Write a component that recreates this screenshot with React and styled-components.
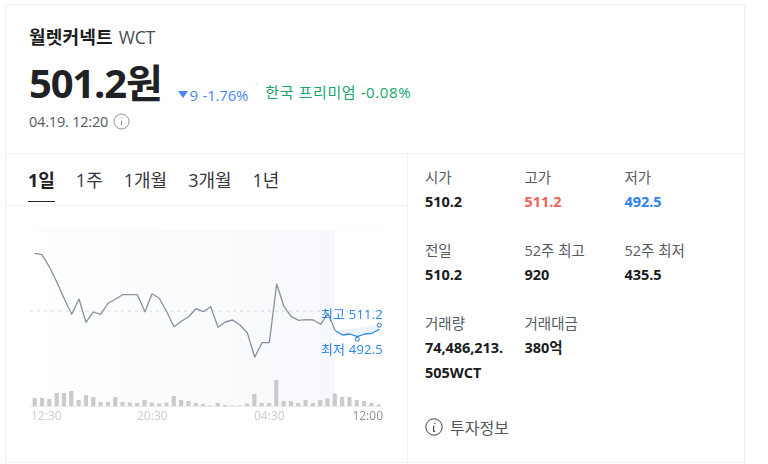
import React from "react";
import styled, { createGlobalStyle } from "styled-components";

const Global = createGlobalStyle`
  html, body { margin: 0; padding: 0; background: #fff; }
  body { font-family: "Open Sans", "Noto Sans CJK KR", sans-serif; color: #1a1c20; }
  * { box-sizing: border-box; }
`;

const Page = styled.div`
  width: 768px;
  height: 464px;
  padding: 4px 23px 0 5px;
  overflow: hidden;
`;
const Card = styled.div`
  width: 740px;
  height: 459px;
  border: 1px solid #eeeff1;
  display: flex;
  flex-direction: column;
`;
const Header = styled.header`
  height: 149px;
  padding: 20px 0 0 23px;
  border-bottom: 1px solid #f1f2f4;
  flex: none;
`;
const Title = styled.div`
  display: flex;
  align-items: baseline;
  gap: 6px;
  height: 24px;
  line-height: 24px;
`;
const Name = styled.strong`
  font-size: 18px;
  font-weight: 700;
  letter-spacing: 0.2px;
`;
const Symbol = styled.span`
  font-size: 17.5px;
  color: #444a55;
  letter-spacing: -0.3px;
`;
const PriceRow = styled.div`
  display: flex;
  align-items: baseline;
  margin-top: 12px;
  height: 44px;
`;
const Price = styled.div`
  font-size: 40px;
  line-height: 44px;
  font-weight: 700;
  letter-spacing: -1.2px;
  color: #1f2125;
`;
const Change = styled.span`
  display: inline-flex;
  align-items: center;
  gap: 2px;
  font-size: 15px;
  color: #4c87f4;
  letter-spacing: -0.2px;
  word-spacing: 1px;
  margin-left: 16px;
`;
const Dot = styled.span`
  width: 3px;
  height: 3px;
  border-radius: 50%;
  background: #eceef1;
  margin: 0 7px;
  align-self: center;
`;
const Premium = styled.span`
  font-size: 15px;
  color: #12a86b;
  letter-spacing: 0.6px;
`;
const DateRow = styled.div`
  display: flex;
  align-items: center;
  gap: 5px;
  margin-top: 7px;
  font-size: 14.5px;
  color: #555a63;
  letter-spacing: -0.2px;
`;
const Body = styled.div`
  flex: 1;
  display: flex;
  min-height: 0;
`;
const Left = styled.section`
  width: 402px;
  flex: none;
  border-right: 1px solid #f1f2f4;
`;
const Tabs = styled.nav`
  display: flex;
  gap: 21px;
  height: 52px;
  padding: 0 0 0 22px;
  border-bottom: 1px solid #f1f2f4;
`;
const Tab = styled.button`
  border: 0;
  background: none;
  padding: 2px 0 0;
  height: 48px;
  font: inherit;
  font-size: 18px;
  font-weight: ${(p) => (p.$on ? 700 : 400)};
  color: ${(p) => (p.$on ? "#1f2125" : "#33363c")};
  border-bottom: 1px solid ${(p) => (p.$on ? "#1f2125" : "transparent")};
`;
const Chart = styled.svg`
  display: block;
  filter: blur(0.3px);
`;
const Right = styled.section`
  flex: 1;
  padding: 14px 0 0 17px;
`;
const Grid = styled.dl`
  display: grid;
  grid-template-columns: 99.5px 100px 100px;
  row-gap: 27px;
  margin: 0;
`;
const Cell = styled.div``;
const Label = styled.dt`
  font-size: 14.5px;
  line-height: 20px;
  color: #555a63;
`;
const Value = styled.dd`
  margin: 1px 0 0;
  font-size: 14.5px;
  line-height: 25px;
  font-weight: 700;
  color: ${(p) => p.$c || "#1a1c20"};
  letter-spacing: -0.05px;
`;
const Invest = styled.div`
  display: flex;
  align-items: center;
  gap: 7px;
  margin-top: 30px;
  font-size: 16px;
  color: #50555e;
`;

const gray = "34.7,253.3 42,254.7 49.3,266.7 56.7,281.7 64,298.3 71.7,314.3 79,299 86,322.3 93.3,312 100.7,314.3 108,303.3 115.3,299.3 122.7,294.7 130,294.7 137.3,294.7 145,311.7 152,293.7 159.3,298.3 166.7,311.7 174,326.7 181.3,321.3 188.7,316.7 196,308.7 203.3,311.7 210.7,306.7 218,327.3 225.3,322 232.7,320 240,325 247.3,332.7 254.7,357.3 262,342.7 269.3,342.7 276.7,284 284,306.7 291.3,316.7 298.7,320.3 306,319.7 313.3,320 320.7,324.3 328,313.7 335.3,330.7";
const blue = "335.3,330.7 342.7,335 350,334 357.3,336.7 364.7,334 372,333.3 379.3,329.3";
const bars = [8,8,7,13,13,15,6,11,9,4,4,9,4,3.5,3,6,3.5,2.5,3.5,10,6,5,3,2,0.5,3,1,0.5,0.5,2.5,12,3,3,26,5,5,3,6,3,6,7.5,12.5,9,9,6,5,3,1.5];

const OX = 6;
const OY = 206;

function PriceChart() {
  return (
    <Chart width="401" height="256" viewBox={`${OX} ${OY} 401 256`}>
      <defs>
        <linearGradient id="bg" x1="0" x2="1" y1="0" y2="0">
          <stop offset="0" stopColor="#fff" />
          <stop offset="0.25" stopColor="#fcfdfe" />
          <stop offset="1" stopColor="#f6f8fb" />
        </linearGradient>
      </defs>
      <rect x="30" y="230" width="305" height="176" fill="url(#bg)" />
      <line x1="30" x2="383" y1="230.5" y2="230.5" stroke="#f7f7f9" />
      <line x1="30" x2="383" y1="311" y2="311" stroke="#d4d8e0" strokeDasharray="3 4" />
      {bars.map((h, i) => (
        <rect key={i} x={32.6 + i * 7.32} y={406 - h} width="4.2" height={h} fill="#cbcbcd" />
      ))}
      <line x1="30" x2="383" y1="406.5" y2="406.5" stroke="#e9eaec" />
      <polygon points="335.3,330.7 342.7,335 350,334 357.3,336.7 364.7,334 372,333.3 379.3,329.3 379.3,325" fill="#eaf3fe" />
      <polyline points={gray} fill="none" stroke="#8a90a2" strokeWidth="1.3" strokeLinejoin="round" />
      <polyline points={blue} fill="none" stroke="#2b86ee" strokeWidth="1.3" strokeLinejoin="round" />
      <circle cx="379.3" cy="325.3" r="2" fill="#fff" stroke="#2a6fb8" />
      <circle cx="357.3" cy="339.3" r="2" fill="#fff" stroke="#2a6fb8" />
      <g fontFamily={'"Open Sans","Noto Sans CJK KR",sans-serif'} fontSize="13" letterSpacing="0.2">
        <text x="383" y="318.5" textAnchor="end" fill="#2b86ee">최고 511.2</text>
        <text x="383" y="353.5" textAnchor="end" fill="#2b86ee">최저 492.5</text>
      </g>
      <g fontFamily={'"Open Sans","Noto Sans CJK KR",sans-serif'} fontSize="12">
        <text x="31" y="420" fill="#c9cbcf">12:30</text>
        <text x="137" y="420" fill="#c9cbcf">20:30</text>
        <text x="254" y="420" fill="#c9cbcf">04:30</text>
        <text x="383" y="420" textAnchor="end" fill="#8d9096">12:00</text>
      </g>
    </Chart>
  );
}

const stats = [
  ["시가", "510.2"],
  ["고가", "511.2", "#f2605a"],
  ["저가", "492.5", "#2f80f0"],
  ["전일", "510.2"],
  ["52주 최고", "920"],
  ["52주 최저", "435.5"],
  ["거래량", "74,486,213.\n505WCT"],
  ["거래대금", "380억"],
];

export default function App() {
  return (
    <Page>
      <Global />
      <Card>
        <Header>
          <Title>
            <Name>월렛커넥트</Name>
            <Symbol>WCT</Symbol>
          </Title>
          <PriceRow>
            <Price>501.2원</Price>
            <Change>
              <svg width="10" height="7" viewBox="0 0 10 7"><path d="M0 0h10L5 7z" fill="#4c87f4" /></svg>
              9 -1.76%
            </Change>
            <Dot />
            <Premium>한국 프리미엄 -0.08%</Premium>
          </PriceRow>
          <DateRow>
            04.19. 12:20
            <svg width="17" height="17" viewBox="0 0 17 17" fill="none">
              <circle cx="8.5" cy="8.5" r="7.5" stroke="#8f9398" />
              <path d="M8.5 7.5v5M8.5 4.6v1" stroke="#8f9398" />
            </svg>
          </DateRow>
        </Header>
        <Body>
          <Left>
            <Tabs>
              <Tab $on>1일</Tab>
              <Tab>1주</Tab>
              <Tab>1개월</Tab>
              <Tab>3개월</Tab>
              <Tab>1년</Tab>
            </Tabs>
            <PriceChart />
          </Left>
          <Right>
            <Grid>
              {stats.map(([l, v, c]) => (
                <Cell key={l}>
                  <Label>{l}</Label>
                  <Value $c={c}>
                    {v.split("\n").map((t) => <div key={t}>{t}</div>)}
                  </Value>
                </Cell>
              ))}
            </Grid>
            <Invest>
              <svg width="18" height="18" viewBox="0 0 18 18" fill="none">
                <circle cx="9" cy="9" r="8.2" stroke="#3f434a" />
                <path d="M9.8 4.8v1.2M8.8 7.8l-.3 4.4c0 1 .7 1.3 1.6.9" stroke="#3f434a" strokeWidth="1.2" />
              </svg>
              투자정보
            </Invest>
          </Right>
        </Body>
      </Card>
    </Page>
  );
}
